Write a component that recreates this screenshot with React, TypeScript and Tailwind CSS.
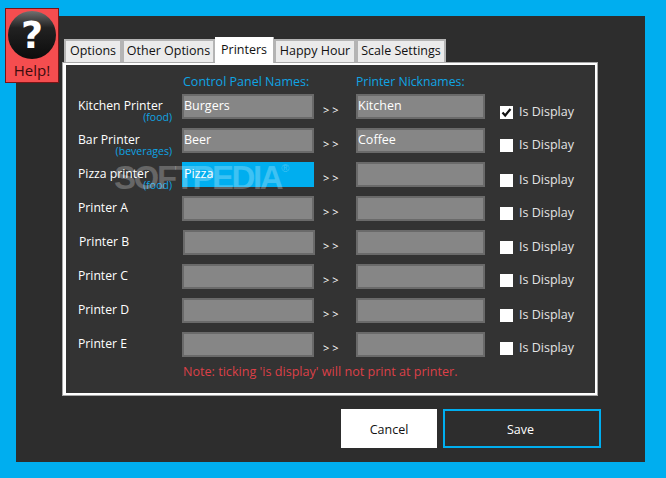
const tabs = [
  { label: "Options", width: "w-[58px]" },
  { label: "Other Options", width: "w-[93px]" },
  { label: "Printers", width: "w-[59px]", active: true },
  { label: "Happy Hour", width: "w-[82px]" },
  { label: "Scale Settings", width: "w-[90px]" },
];

const rows = [
  { name: "Kitchen Printer", sub: "(food)", control: "Burgers", nick: "Kitchen", checked: true, checkTop: "mt-[10px]" },
  { name: "Bar Printer", sub: "(beverages)", control: "Beer", nick: "Coffee", checkTop: "mt-[9px]" },
  { name: "Pizza printer", sub: "(food)", control: "Pizza", nick: "", selected: true, checkTop: "mt-[10px]" },
  { name: "Printer A", control: "", nick: "", checkTop: "mt-[9px]" },
  { name: "Printer B", control: "", nick: "", shift: true, checkTop: "mt-[9px]" },
  { name: "Printer C", control: "", nick: "", checkTop: "mt-[8px]" },
  { name: "Printer D", control: "", nick: "", checkTop: "mt-[9px]" },
  { name: "Printer E", control: "", nick: "", checkTop: "mt-[8px]" },
];

type Row = (typeof rows)[number];

function Field({ value, selected, width }: { value: string; selected?: boolean; width: string }) {
  return (
    <div
      className={`${width} h-[25px] shrink-0 border-2 text-[12.5px] leading-[19px] text-white ${
        selected ? "border-[#00aeef] bg-[#00aeef]" : "border-[#6a6a6a] bg-[#868686]"
      }`}
    >
      {value}
    </div>
  );
}

function PrinterRow({ row }: { row: Row }) {
  return (
    <div className="flex h-[34px] items-start">
      <div className={`relative h-[34px] w-[104px] shrink-0 ${row.shift ? "ml-[1px]" : ""}`}>
        <div className="mt-[3px] text-[12.2px] leading-[18px] text-white">{row.name}</div>
        {row.sub && (
          <div className="absolute right-[10px] top-[16px] text-[10.5px] leading-[14px] text-[#0fa4e4]">{row.sub}</div>
        )}
      </div>
      <Field value={row.control} selected={row.selected} width="w-[132px]" />
      <div
        className={`mt-[8px] w-[33px] shrink-0 text-[11px] leading-[16px] text-white ${
          row.shift ? "ml-[8px]" : "ml-[9px]"
        }`}
      >
        &gt; &gt;
      </div>
      <Field value={row.nick} width="w-[129px]" />
      <div className={`${row.checkTop} ml-[15px] flex items-center`}>
        <div className="flex h-[13px] w-[13px] items-center justify-center bg-white">
          {row.checked && (
            <svg viewBox="0 0 13 13" className="h-[13px] w-[13px]">
              <path d="M2.5 6.5 L5.2 9.5 L10.5 3" fill="none" stroke="#111" strokeWidth="2.2" />
            </svg>
          )}
        </div>
        <span className="ml-[6px] text-[12.5px] leading-[16px] text-[#e4e4e4]">Is Display</span>
      </div>
    </div>
  );
}

export default function App() {
  return (
    <div className="relative h-[478px] w-[666px] overflow-hidden bg-[#00aeef] p-[16px] font-['Open_Sans','Noto_Sans',sans-serif]">
      <div className="flex h-[446px] w-[629px] flex-col bg-[#2d2d2d] pl-[46px] pt-[24px]">
        {/* Tabs */}
        <div className="ml-[2px] flex h-[22px] items-end">
          {tabs.map((tab) =>
            tab.active ? (
              <div
                key={tab.label}
                className={`${tab.width} relative z-10 -mb-[1px] h-[26px] border-r border-[#b4b4b4] bg-white text-center text-[12.5px] leading-[25px] text-[#111]`}
              >
                {tab.label}
              </div>
            ) : (
              <div
                key={tab.label}
                className={`${tab.width} h-[23px] border-2 border-b-0 border-[#b4b4b4] bg-[#ebebeb] text-center text-[12.5px] leading-[19px] text-[#111]`}
              >
                {tab.label}
              </div>
            ),
          )}
        </div>

        {/* Printers page */}
        <div className="h-[334px] w-[536px] border border-[#a8a8a8] bg-white py-[2px] pl-[3px] pr-[2px]">
          <div className="h-full w-full bg-[#333333] pl-[12px]">
            <div className="flex h-[29px] items-end pb-[3px] leading-[18px] text-[#0fa4e4]">
              <span className="ml-[105px] w-[173px] text-[12.5px]">Control Panel Names:</span>
              <span className="text-[12.25px]">Printer Nicknames:</span>
            </div>
            <div>
              {rows.map((row) => (
                <PrinterRow key={row.name} row={row} />
              ))}
            </div>
            <div className="-mt-[3px] ml-[105px] text-[12.6px] leading-[18px] text-[#dc4048]">
              Note: ticking 'is display' will not print at printer.
            </div>
          </div>
        </div>

        {/* Actions */}
        <div className="ml-[279px] mt-[13px] flex gap-[6px]">
          <button className="h-[39px] w-[96px] bg-white pt-[3px] text-[12.5px] text-[#111]">Cancel</button>
          <button className="h-[39px] w-[158px] border-2 border-[#00aeef] bg-[#2d2d2d] pr-[3px] pt-[3px] text-[12.5px] text-white">
            Save
          </button>
        </div>
      </div>

      {/* Help badge */}
      <div className="absolute left-[5px] top-[8px] flex h-[75px] w-[54px] flex-col items-center border border-[#7a1416] bg-[#f54d4f]">
        <div className="mt-[2px] flex h-[48px] w-[48px] items-center justify-center rounded-full bg-gradient-to-b from-[#707070] via-[#222222] via-[35%] to-[#0c0c0c]">
          <span className="font-['DejaVu_Sans',sans-serif] text-[38px] font-bold leading-[44px] text-white">?</span>
        </div>
        <span className="mt-[1px] text-[15px] leading-[20px] text-[#3a0c0e]">Help!</span>
      </div>

      {/* Watermark */}
      <div className="pointer-events-none absolute left-[114px] top-[158px] font-['Liberation_Sans',sans-serif] text-[33px] font-bold leading-[40px] tracking-[-2.4px] text-white/25">
        SOFTPEDIA<sup className="align-super text-[11px] font-normal">®</sup>
      </div>
    </div>
  );
}
